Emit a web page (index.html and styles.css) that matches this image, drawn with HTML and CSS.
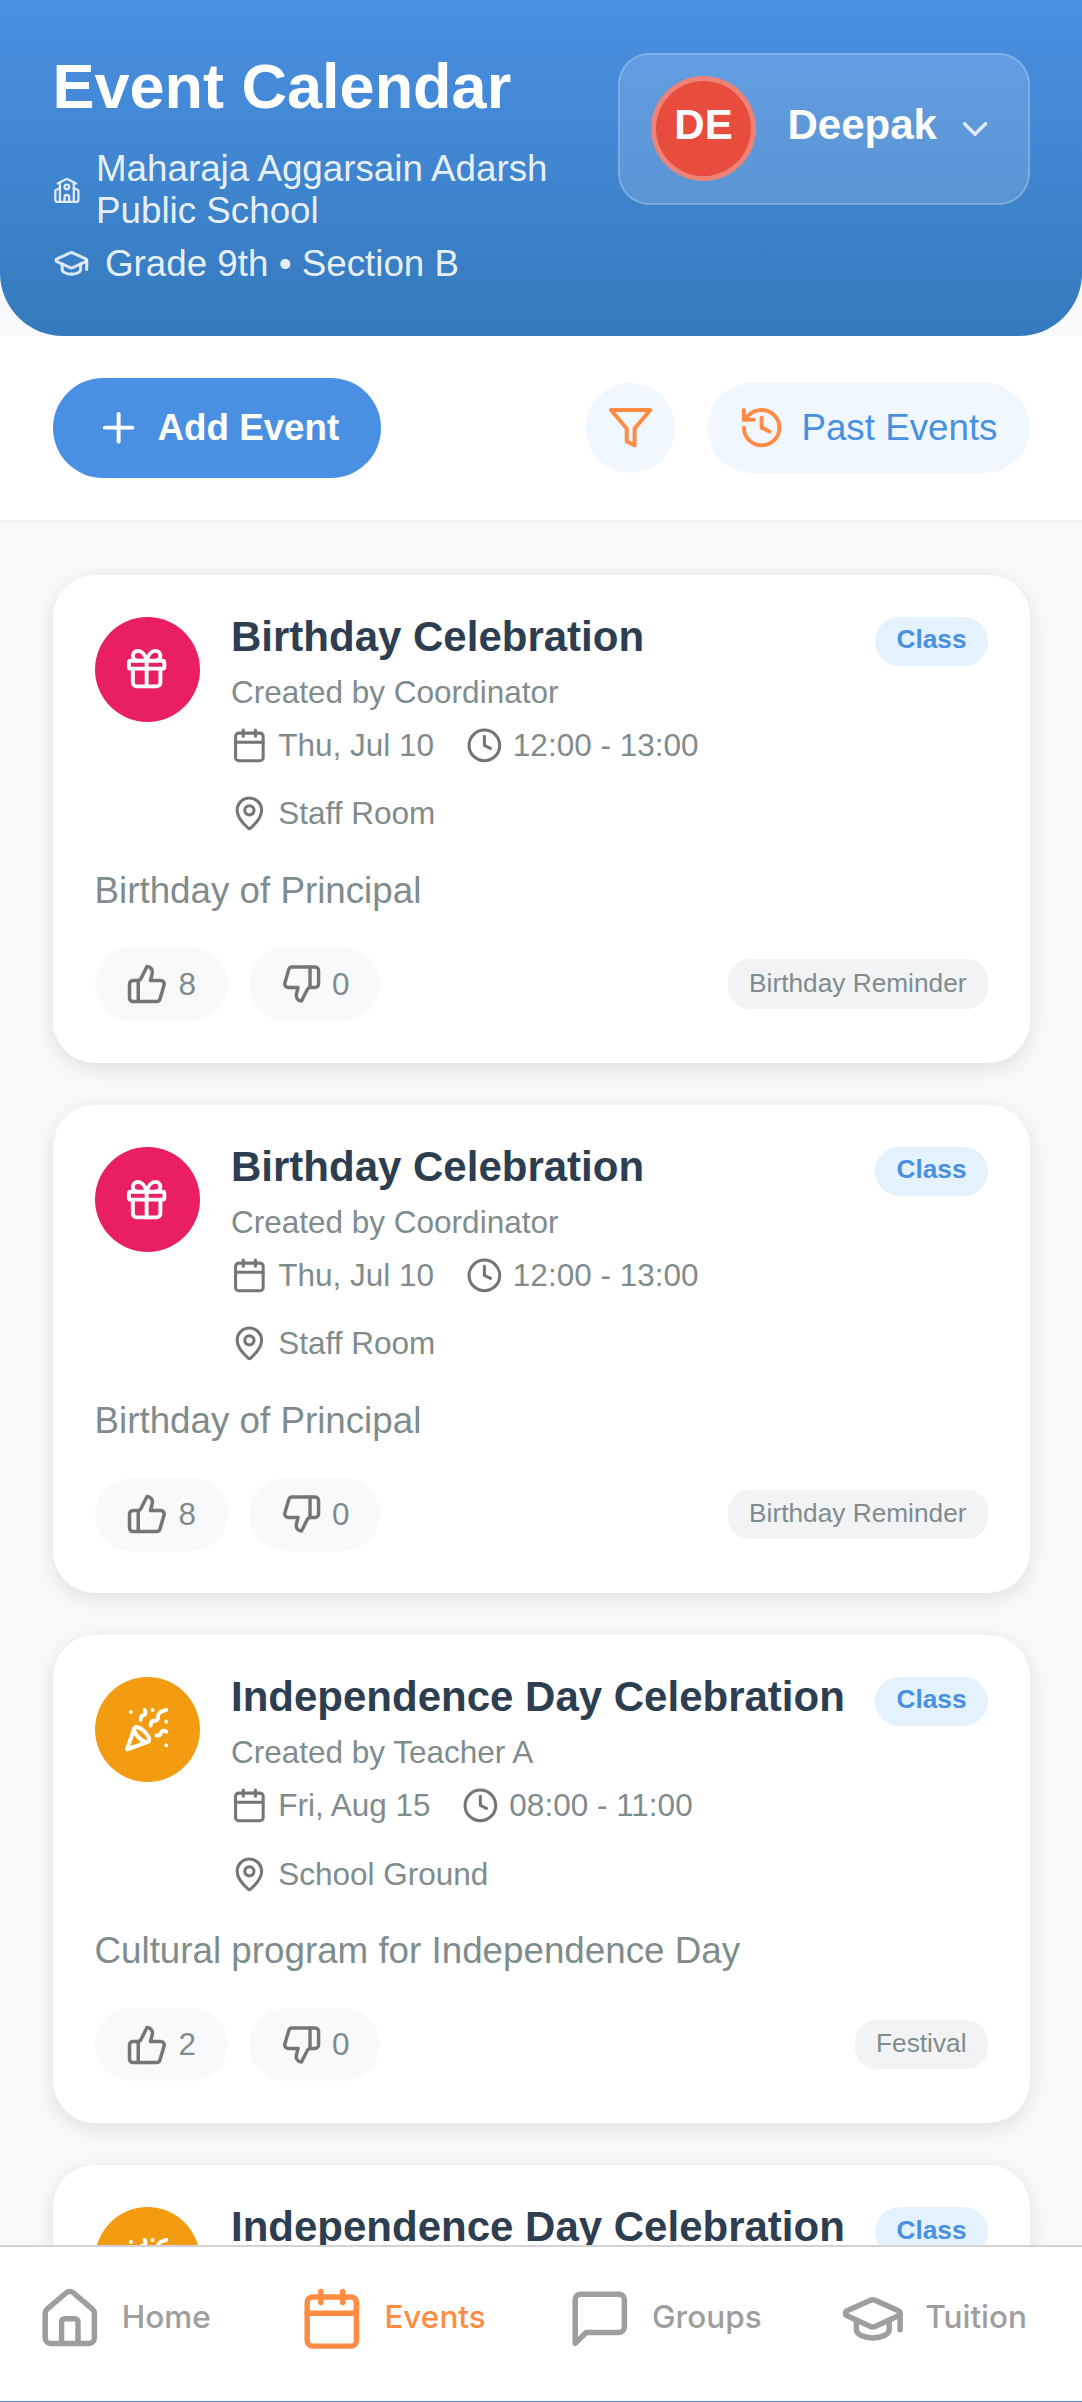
FILE: index.html
```html
<!DOCTYPE html>
<html lang="en">
<head>
<meta charset="utf-8">
<title>Event Calendar</title>
<link rel="stylesheet" href="styles.css">
</head>
<body>
<svg class="sprite" aria-hidden="true">
  <symbol id="school" viewBox="0 0 24 24"><path d="M14 22v-4a2 2 0 1 0-4 0v4"/><path d="m18 10 3.447 1.724a1 1 0 0 1 .553.894V20a2 2 0 0 1-2 2H4a2 2 0 0 1-2-2v-7.382a1 1 0 0 1 .553-.894L6 10"/><path d="M18 5v17"/><path d="m4 6 7.106-3.553a2 2 0 0 1 1.788 0L20 6"/><path d="M6 5v17"/><circle cx="12" cy="9" r="2"/></symbol>
  <symbol id="cap" viewBox="0 0 24 24"><path d="M21.42 10.922a1 1 0 0 0-.019-1.838L12.83 5.18a2 2 0 0 0-1.66 0L2.6 9.08a1 1 0 0 0 0 1.832l8.57 3.908a2 2 0 0 0 1.66 0z"/><path d="M22 10v6"/><path d="M6 12.5V16a6 3 0 0 0 12 0v-3.5"/></symbol>
  <symbol id="chevron" viewBox="0 0 24 24"><path d="m6 9 6 6 6-6"/></symbol>
  <symbol id="plus" viewBox="0 0 24 24"><path d="M5 12h14"/><path d="M12 5v14"/></symbol>
  <symbol id="funnel" viewBox="0 0 24 24"><polygon points="22 3 2 3 10 12.46 10 19 14 21 14 12.46"/></symbol>
  <symbol id="history" viewBox="0 0 24 24"><path d="M3 12a9 9 0 1 0 9-9 9.75 9.75 0 0 0-6.74 2.74L3 8"/><path d="M3 3v5h5"/><path d="M12 7v5l4 2"/></symbol>
  <symbol id="gift" viewBox="0 0 24 24"><rect x="3" y="8" width="18" height="4" rx="1"/><path d="M12 8v13"/><path d="M19 12v7a2 2 0 0 1-2 2H7a2 2 0 0 1-2-2v-7"/><path d="M7.5 8a2.5 2.5 0 0 1 0-5A4.8 8 0 0 1 12 8a4.8 8 0 0 1 4.5-5 2.5 2.5 0 0 1 0 5"/></symbol>
  <symbol id="party" viewBox="0 0 24 24"><path d="M5.8 11.3 2 22l10.7-3.79"/><path d="M4 3h.01"/><path d="M22 8h.01"/><path d="M15 2h.01"/><path d="M22 20h.01"/><path d="m22 2-2.24.75a2.9 2.9 0 0 0-1.96 3.12c.1.86-.57 1.63-1.45 1.63h-.38c-.86 0-1.6.6-1.76 1.44L14 10"/><path d="m22 13-.82-.33c-.86-.34-1.82.2-1.98 1.11c-.11.7-.72 1.22-1.43 1.22H17"/><path d="m11 2 .33.82c.34.86-.2 1.82-1.11 1.98C9.52 4.9 9 5.52 9 6.23V7"/><path d="M11 13c1.93 1.93 2.83 4.17 2 5-.83.83-3.07-.07-5-2-1.93-1.93-2.83-4.17-2-5 .83-.83 3.07.07 5 2Z"/></symbol>
  <symbol id="calendar" viewBox="0 0 24 24"><path d="M8 2v4"/><path d="M16 2v4"/><rect x="3" y="4" width="18" height="18" rx="2"/><path d="M3 10h18"/></symbol>
  <symbol id="clock" viewBox="0 0 24 24"><circle cx="12" cy="12" r="10"/><path d="M12 6v6l4 2"/></symbol>
  <symbol id="pin" viewBox="0 0 24 24"><path d="M20 10c0 4.993-5.539 10.193-7.399 11.799a1 1 0 0 1-1.202 0C9.539 20.193 4 14.993 4 10a8 8 0 0 1 16 0"/><circle cx="12" cy="10" r="3"/></symbol>
  <symbol id="up" viewBox="0 0 24 24"><path d="M7 10v12"/><path d="M15 5.88 14 10h5.83a2 2 0 0 1 1.92 2.56l-2.33 8A2 2 0 0 1 17.5 22H4a2 2 0 0 1-2-2v-8a2 2 0 0 1 2-2h2.76a2 2 0 0 0 1.79-1.11L12 2a3.13 3.13 0 0 1 3 3.88Z"/></symbol>
  <symbol id="down" viewBox="0 0 24 24"><path d="M17 14V2"/><path d="M9 18.12 10 14H4.17a2 2 0 0 1-1.92-2.56l2.33-8A2 2 0 0 1 6.5 2H20a2 2 0 0 1 2 2v8a2 2 0 0 1-2 2h-2.76a2 2 0 0 0-1.79 1.11L12 22a3.13 3.13 0 0 1-3-3.88Z"/></symbol>
  <symbol id="house" viewBox="0 0 24 24"><path d="M15 21v-8a1 1 0 0 0-1-1h-4a1 1 0 0 0-1 1v8"/><path d="M3 10a2 2 0 0 1 .709-1.528l7-5.999a2 2 0 0 1 2.582 0l7 5.999A2 2 0 0 1 21 10v9a2 2 0 0 1-2 2H5a2 2 0 0 1-2-2z"/></symbol>
  <symbol id="message" viewBox="0 0 24 24"><path d="M21 15a2 2 0 0 1-2 2H7l-4 4V5a2 2 0 0 1 2-2h14a2 2 0 0 1 2 2z"/></symbol>
</svg>
<div class="app">
  <header class="header">
    <div class="heading">
      <h1>Event Calendar</h1>
      <div class="info school"><svg class="icon"><use href="#school"/></svg><span>Maharaja Aggarsain Adarsh<br>Public School</span></div>
      <div class="info"><svg class="icon"><use href="#cap"/></svg><span>Grade 9th • Section B</span></div>
    </div>
    <div class="user">
      <div class="avatar"><span>DE</span></div>
      <span class="user-name">Deepak</span>
      <svg class="icon user-arrow"><use href="#chevron"/></svg>
    </div>
  </header>

  <div class="toolbar">
    <button class="add"><svg class="icon"><use href="#plus"/></svg>Add Event</button>
    <div class="tools">
      <button class="tool filter" aria-label="Filter"><svg class="icon"><use href="#funnel"/></svg></button>
      <button class="tool past"><svg class="icon"><use href="#history"/></svg><span>Past Events</span></button>
    </div>
  </div>

  <main class="events">
    <article class="card">
      <div class="card-head">
        <div class="badge-icon birthday"><svg class="icon"><use href="#gift"/></svg></div>
        <div class="details">
          <h2>Birthday Celebration</h2>
          <p class="author">Created by Coordinator</p>
          <div class="meta">
            <span><svg class="icon"><use href="#calendar"/></svg>Thu, Jul 10</span>
            <span><svg class="icon"><use href="#clock"/></svg>12:00 - 13:00</span>
            <span><svg class="icon"><use href="#pin"/></svg>Staff Room</span>
          </div>
        </div>
        <span class="scope">Class</span>
      </div>
      <p class="description">Birthday of Principal</p>
      <div class="card-foot">
        <button class="vote"><svg class="icon"><use href="#up"/></svg>8</button>
        <button class="vote against"><svg class="icon"><use href="#down"/></svg>0</button>
        <span class="tag">Birthday Reminder</span>
      </div>
    </article>

    <article class="card">
      <div class="card-head">
        <div class="badge-icon birthday"><svg class="icon"><use href="#gift"/></svg></div>
        <div class="details">
          <h2>Birthday Celebration</h2>
          <p class="author">Created by Coordinator</p>
          <div class="meta">
            <span><svg class="icon"><use href="#calendar"/></svg>Thu, Jul 10</span>
            <span><svg class="icon"><use href="#clock"/></svg>12:00 - 13:00</span>
            <span><svg class="icon"><use href="#pin"/></svg>Staff Room</span>
          </div>
        </div>
        <span class="scope">Class</span>
      </div>
      <p class="description">Birthday of Principal</p>
      <div class="card-foot">
        <button class="vote"><svg class="icon"><use href="#up"/></svg>8</button>
        <button class="vote against"><svg class="icon"><use href="#down"/></svg>0</button>
        <span class="tag">Birthday Reminder</span>
      </div>
    </article>

    <article class="card">
      <div class="card-head">
        <div class="badge-icon festival"><svg class="icon"><use href="#party"/></svg></div>
        <div class="details">
          <h2>Independence Day Celebration</h2>
          <p class="author">Created by Teacher A</p>
          <div class="meta">
            <span><svg class="icon"><use href="#calendar"/></svg>Fri, Aug 15</span>
            <span><svg class="icon"><use href="#clock"/></svg>08:00 - 11:00</span>
            <span><svg class="icon"><use href="#pin"/></svg>School Ground</span>
          </div>
        </div>
        <span class="scope">Class</span>
      </div>
      <p class="description">Cultural program for Independence Day</p>
      <div class="card-foot">
        <button class="vote"><svg class="icon"><use href="#up"/></svg>2</button>
        <button class="vote against"><svg class="icon"><use href="#down"/></svg>0</button>
        <span class="tag">Festival</span>
      </div>
    </article>

    <article class="card">
      <div class="card-head">
        <div class="badge-icon festival"><svg class="icon"><use href="#party"/></svg></div>
        <div class="details">
          <h2>Independence Day Celebration</h2>
        </div>
        <span class="scope">Class</span>
      </div>
    </article>
  </main>

  <nav class="nav">
    <a><svg class="icon"><use href="#house"/></svg><span>Home</span></a>
    <a class="active"><svg class="icon"><use href="#calendar"/></svg><span>Events</span></a>
    <a><svg class="icon"><use href="#message"/></svg><span>Groups</span></a>
    <a><svg class="icon"><use href="#cap"/></svg><span>Tuition</span></a>
  </nav>
</div>
</body>
</html>
```
FILE: styles.css
```css
* { box-sizing: border-box; margin: 0; padding: 0; }

body {
  font-family: "Liberation Sans", Arial, sans-serif;
  background: #f8f9fa;
}

button { border: 0; font: inherit; color: inherit; }

.sprite { display: none; }

.icon {
  display: block;
  flex: none;
  fill: none;
  stroke: currentColor;
  stroke-width: 2;
  stroke-linecap: round;
  stroke-linejoin: round;
}

.app {
  display: flex;
  flex-direction: column;
  height: 2402px;
  overflow: hidden;
  background: #f8f9fb;
}

/* Header */
.header {
  display: flex;
  justify-content: space-between;
  align-items: flex-start;
  flex: none;
  height: 336px;
  padding: 52.5px 52.5px 0;
  border-radius: 0 0 63px 63px;
  background: linear-gradient(180deg, #4a90e2 0%, #357abd 100%);
  color: #fff;
}

.heading { margin-top: -2.5px; }

.heading h1 {
  font-size: 63px;
  line-height: 72px;
  margin-bottom: 26px;
}

.info {
  display: flex;
  align-items: center;
  gap: 15.75px;
  margin-bottom: 10.5px;
  font-size: 36.75px;
  line-height: 42px;
  color: rgba(255, 255, 255, 0.9);
}

.info .icon { width: 36.75px; height: 36.75px; opacity: 0.9; }
.school .icon { width: 27.75px; }

.user {
  display: flex;
  align-items: center;
  width: 412px;
  height: 152.25px;
  padding: 0 31.5px;
  border: 2.625px solid rgba(255, 255, 255, 0.2);
  border-radius: 31.5px;
  background: rgba(255, 255, 255, 0.15);
  font-size: 42px;
  font-weight: 700;
}

.avatar {
  display: flex;
  align-items: center;
  justify-content: center;
  width: 105px;
  height: 105px;
  margin-right: 31.5px;
  border: 5.25px solid rgba(255, 255, 255, 0.3);
  border-radius: 50%;
  background: #e74c3c;
}

.avatar span, .user-name { padding-bottom: 8px; line-height: 48px; }
.user-arrow { width: 42px; height: 42px; margin-left: auto; opacity: 0.8; }

/* Toolbar */
.toolbar {
  display: flex;
  justify-content: space-between;
  align-items: center;
  flex: none;
  height: 186px;
  padding: 0 52.5px;
  border-bottom: 2px solid #f0f1f2;
  background: #fff;
  font-size: 36.75px;
}

.add, .tool {
  display: flex;
  align-items: center;
  gap: 15.75px;
}

.toolbar .icon { width: 47.25px; height: 47.25px; }

.add {
  height: 100px;
  padding: 0 42px;
  border-radius: 52.5px;
  background: #4a90e2;
  color: #fff;
  font-weight: 700;
}

.tools { display: flex; gap: 31.5px; }

.tool {
  height: 89.25px;
  border-radius: 52.5px;
  background: #f0f7ff;
  color: #4a90e2;
}

.tool .icon { color: #ff8c42; }
.filter { padding: 0 21px; }
.past { padding: 0 32px 0 31.5px; }

/* Event list */
.events {
  display: flex;
  flex-direction: column;
  gap: 42px;
  flex: 1;
  min-height: 0;
  padding: 52.5px 52.5px 0;
  overflow: hidden;
}

.card {
  flex: none;
  height: 488.2px;
  padding: 42px;
  border-radius: 42px;
  background: #fff;
  box-shadow: 0 5.25px 21px rgba(0, 0, 0, 0.1);
  color: #7f8c8d;
}

.card-head {
  display: flex;
  align-items: flex-start;
  height: 215.6px;
}

.badge-icon {
  display: flex;
  align-items: center;
  justify-content: center;
  flex: none;
  width: 105px;
  height: 105px;
  margin-right: 31.5px;
  border-radius: 50%;
  color: #fff;
}

.badge-icon .icon { width: 47.25px; height: 47.25px; }
.birthday { background: #e91e63; }
.festival { background: #f39c12; }

.details { flex: 1; min-width: 0; margin-top: -4px; }

.details h2 {
  font-size: 42px;
  line-height: 48px;
  color: #2c3e50;
  white-space: nowrap;
}

.author {
  margin: 13.6px 0 16.8px;
  font-size: 31.5px;
  line-height: 36px;
}

.meta {
  display: flex;
  flex-wrap: wrap;
  gap: 31.5px;
  font-size: 31.5px;
  line-height: 36.75px;
}

.meta span { display: flex; align-items: center; gap: 10.5px; }
.meta .icon { width: 36.75px; height: 36.75px; color: #757575; }

.scope, .tag {
  flex: none;
  height: 49.6px;
  padding: 7.5px 21px 0;
  font-size: 26.25px;
  line-height: 30px;
}

.scope {
  border-radius: 26.25px;
  background: #e3f2fd;
  color: #4a90e2;
  font-weight: 700;
}

.description {
  margin: 37.5px 0 35.8px;
  font-size: 36.75px;
  line-height: 42px;
}

.card-foot { display: flex; align-items: center; gap: 21px; }

.vote {
  display: flex;
  align-items: center;
  gap: 10.5px;
  height: 73.5px;
  padding: 0 32px 0 31.5px;
  border-radius: 42px;
  background: #f8f9fb;
  font-size: 31.5px;
}

.vote .icon { width: 42px; height: 42px; color: #757575; }
.against { padding-right: 30.5px; }
.against .icon { width: 41px; }

.tag {
  margin-left: auto;
  padding-top: 8.5px;
  border-radius: 21px;
  background: #f1f3f4;
}

/* Bottom navigation */
.nav {
  display: grid;
  grid-template-columns: 262.6px 267.7px 273.2px auto;
  align-items: center;
  flex: none;
  height: 157px;
  padding: 0 0 11px 36.5px;
  border-top: 2px solid #d3d3d3;
  border-bottom: 1px solid #4a90e2;
  background: #fff;
  color: #9e9e9e;
  font-family: Inter, sans-serif;
  font-size: 31.5px;
  font-weight: 500;
}

.nav a { display: flex; align-items: center; gap: 19.7px; line-height: 40px; }
.nav span { padding-bottom: 4px; }
.nav .icon { width: 65.6px; height: 65.6px; }
.nav .active { color: #ff8c42; }
```
